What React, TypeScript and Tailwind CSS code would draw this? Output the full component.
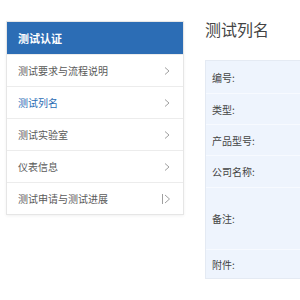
import React from "react";

const Chevron = () => (
  <svg width="8" height="10" viewBox="0 0 8 10" className="text-[#a0a0a0]">
    <path d="M2 1.5 L6 5 L2 8.5" fill="none" stroke="currentColor" strokeWidth="1" />
  </svg>
);

const BarChevron = () => (
  <svg width="10" height="12" viewBox="0 0 10 12" className="text-[#a0a0a0]">
    <path d="M1.5 1 L1.5 11" fill="none" stroke="currentColor" strokeWidth="1" />
    <path d="M4 2 L8.5 6 L4 10" fill="none" stroke="currentColor" strokeWidth="1" />
  </svg>
);

const items = [
  { t: "测试要求与流程说明", active: false, bar: false },
  { t: "测试列名", active: true, bar: false },
  { t: "测试实验室", active: false, bar: false },
  { t: "仪表信息", active: false, bar: false },
  { t: "测试申请与测试进展", active: false, bar: true },
];

const rows = [
  { t: "编号:", h: "h-[32px]" },
  { t: "类型:", h: "h-[31px]" },
  { t: "产品型号:", h: "h-[31px]" },
  { t: "公司名称:", h: "h-[32px]" },
  { t: "备注:", h: "h-[62px]" },
  { t: "附件:", h: "h-[29px]" },
];

export default function App() {
  return (
    <div
      className="w-[300px] h-[300px] bg-white overflow-hidden flex"
      style={{ fontFamily: '"Noto Sans CJK SC", "Noto Sans", sans-serif' }}
    >
      <div className="pl-[6px] pt-[21px] w-[184px] shrink-0">
        <div className="border border-[#e6e6e6] shadow-[0_1px_3px_rgba(0,0,0,0.06)]">
          <div className="h-[32px] bg-[#2c6db5] flex items-center pl-[11px] text-white text-[11px] font-bold">
            测试认证
          </div>
          {items.map((it, i) => (
            <div
              key={i}
              className="h-[32px] border-t border-[#ececec] first:border-t-0 flex items-center justify-between pl-[11px] pr-[12px]"
            >
              <span className={`text-[10px] ${it.active ? "text-[#2c6db5]" : "text-[#5a5a5a]"}`}>{it.t}</span>
              {it.bar ? <BarChevron /> : <Chevron />}
            </div>
          ))}
        </div>
      </div>
      <div className="flex-1 pl-[21px] pt-[15px]">
        <div className="text-[16px] text-[#444444] leading-[28px]">测试列名</div>
        <div className="mt-[17px] bg-[#eef4fd] border border-[#e4eaf3] border-r-0">
          {rows.map((r, i) => (
            <div
              key={i}
              className={`${r.h} flex items-center pl-[6px] text-[10px] text-[#444444] ${i > 0 ? "border-t border-[#f7faff]" : ""}`}
            >
              {r.t}
            </div>
          ))}
        </div>
      </div>
    </div>
  );
}
